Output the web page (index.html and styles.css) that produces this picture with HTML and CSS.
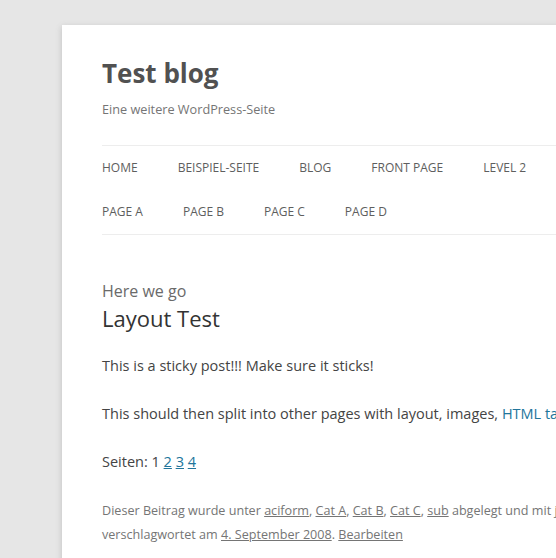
FILE: index.html
```html
<!DOCTYPE html>
<html lang="de">
<head>
<meta charset="utf-8">
<title>Test blog</title>
<link rel="stylesheet" href="styles.css">
</head>
<body>
<div class="site">
  <header class="site-header">
    <h1 class="site-title">Test blog</h1>
    <h2 class="site-description">Eine weitere WordPress-Seite</h2>
    <nav class="main-nav">
      <ul class="menu">
        <li>Home</li>
        <li>Beispiel-Seite</li>
        <li>Blog</li>
        <li>Front Page</li>
        <li>Level 2</li>
        <li>Page A</li>
        <li>Page B</li>
        <li>Page C</li>
        <li>Page D</li>
      </ul>
    </nav>
  </header>
  <main class="site-content">
    <article class="post">
      <header class="entry-header">
        <div class="entry-kicker">Here we go</div>
        <h1 class="entry-title">Layout Test</h1>
      </header>
      <div class="entry-content">
        <p>This is a sticky post!!! Make sure it sticks!</p>
        <p>This should then split into other pages with layout, images, <a href="#">HTML tags</a>, and other things.</p>
        <div class="page-links">Seiten: 1 <a href="#">2</a> <a href="#">3</a> <a href="#">4</a></div>
      </div>
      <footer class="entry-meta">
        Dieser Beitrag wurde unter <a href="#">aciform</a>, <a href="#">Cat A</a>, <a href="#">Cat B</a>, <a href="#">Cat C</a>, <a href="#">sub</a> abgelegt und mit <a href="#">jquery</a>, <a href="#">test</a>, <a href="#">layout</a> verschlagwortet am <a href="#">4. September 2008</a>. <a href="#">Bearbeiten</a>
      </footer>
    </article>
  </main>
</div>
</body>
</html>
```

FILE: styles.css
```css
html {
  overflow: hidden;
}
body {
  margin: 0;
  background: #e6e6e6;
  font-family: "Open Sans", "Liberation Sans", sans-serif;
  color: #444;
  font-size: 14px;
  line-height: 24px;
}
.site {
  width: 880px;
  margin: 25px 0 0 62px;
  padding: 0 40px 40px;
  background: #fff;
  box-shadow: rgba(100, 100, 100, 0.3) 0 2px 6px;
}
.site-header {
  padding: 24px 0 0;
}
.site-title {
  margin: 0;
  font-size: 26px;
  line-height: 48px;
  font-weight: bold;
  color: #515151;
}
.site-description {
  margin: 0;
  font-size: 12.7px;
  line-height: 24px;
  font-weight: normal;
  color: #757575;
}
.main-nav {
  margin-top: 24px;
  border-top: 1px solid #ededed;
  border-bottom: 1px solid #ededed;
}
.menu {
  list-style: none;
  margin: 0;
  padding: 0;
  width: 490px;
  display: flex;
  flex-wrap: wrap;
}
.menu li {
  margin-right: 40px;
  font-size: 12px;
  line-height: 44px;
  text-transform: uppercase;
  color: #5e5e5e;
}
.site-content {
  width: 625px;
  margin-top: 44px;
}
.entry-kicker {
  font-size: 16px;
  line-height: 24px;
  color: #6a6a6a;
}
.entry-title {
  margin: 0;
  font-size: 22px;
  line-height: 30px;
  font-weight: normal;
  color: #333;
}
.entry-content {
  margin-top: 21px;
  font-size: 14.5px;
}
.entry-content p {
  margin: 0 0 24px;
}
.entry-content a {
  color: #21759b;
  text-decoration: none;
}
.page-links a {
  text-decoration: underline;
}
.entry-meta {
  margin-top: 25px;
  font-size: 12.6px;
  line-height: 24px;
  color: #757575;
}
.entry-meta a {
  color: #757575;
  text-decoration: underline;
}
```
